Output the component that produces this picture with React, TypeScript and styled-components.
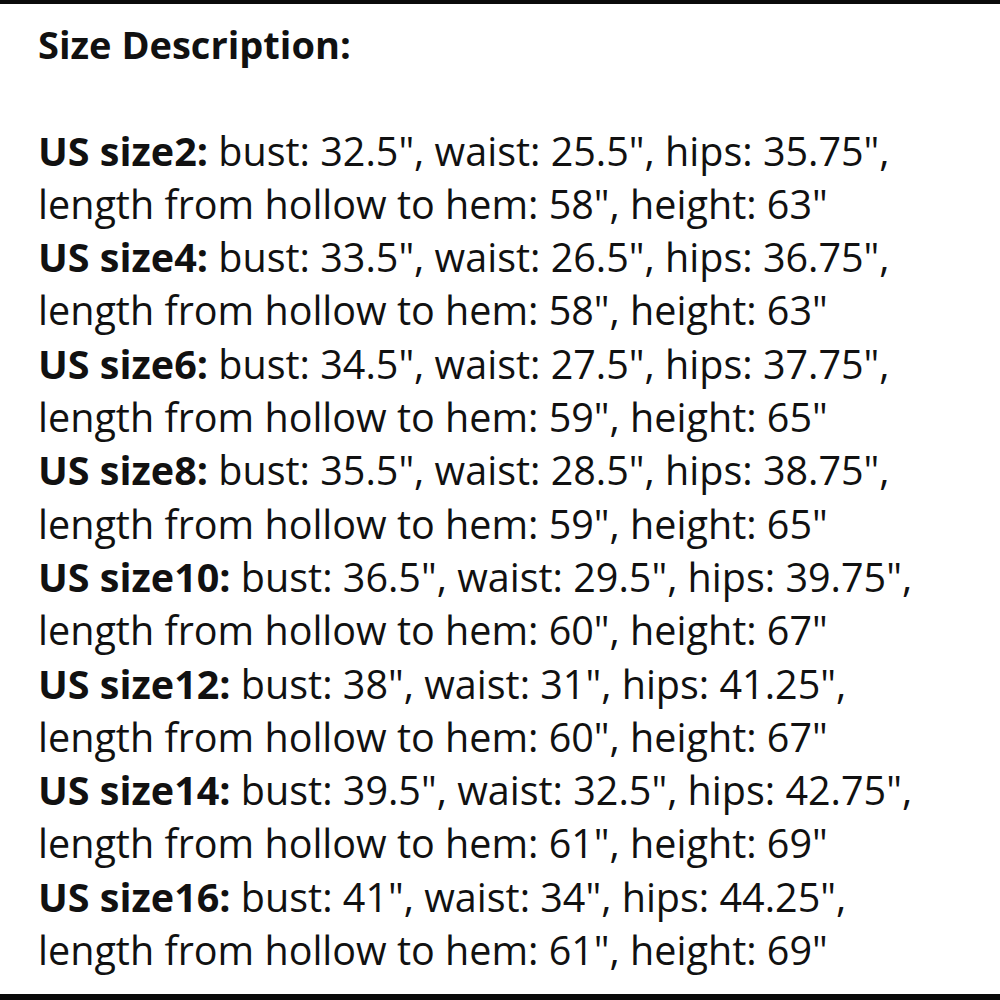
import React from "react";
import styled, { createGlobalStyle } from "styled-components";

const GlobalStyle = createGlobalStyle`
    html, body {
        margin: 0;
        padding: 0;
        background: #ffffff;
    }
`;

const Frame = styled.div`
    box-sizing: border-box;
    width: 1000px;
    height: 1000px;
    border-top: 4px solid #0a0a0a;
    border-bottom: 6px solid #0a0a0a;
    background: #ffffff;
    padding: 14px 0 0 38px;
    font-family: "Open Sans", "Noto Sans", sans-serif;
    font-size: 39.5px;
    line-height: 53.3px;
    color: #111111;
    overflow: hidden;
`;

const Title = styled.div`
    font-weight: 700;
    font-size: 38px;
    height: 53.3px;
    margin-bottom: 53.3px;
`;

const Line = styled.div`
    height: 53.3px;
    white-space: nowrap;
`;

const Label = styled.span`
    font-weight: 700;
`;

interface SizeRow {
    size: string;
    bust: string;
    waist: string;
    hips: string;
    length: string;
    height: string;
}

const sizes: SizeRow[] = [
    { size: "2", bust: "32.5", waist: "25.5", hips: "35.75", length: "58", height: "63" },
    { size: "4", bust: "33.5", waist: "26.5", hips: "36.75", length: "58", height: "63" },
    { size: "6", bust: "34.5", waist: "27.5", hips: "37.75", length: "59", height: "65" },
    { size: "8", bust: "35.5", waist: "28.5", hips: "38.75", length: "59", height: "65" },
    { size: "10", bust: "36.5", waist: "29.5", hips: "39.75", length: "60", height: "67" },
    { size: "12", bust: "38", waist: "31", hips: "41.25", length: "60", height: "67" },
    { size: "14", bust: "39.5", waist: "32.5", hips: "42.75", length: "61", height: "69" },
    { size: "16", bust: "41", waist: "34", hips: "44.25", length: "61", height: "69" },
];

const App = () => {
    return (
        <>
            <GlobalStyle />
            <Frame>
                <Title>Size Description:</Title>
                {sizes.map((row) => (
                    <React.Fragment key={row.size}>
                        <Line>
                            <Label>US size{row.size}:</Label> bust: {row.bust}", waist: {row.waist}", hips:{" "}
                            {row.hips}",
                        </Line>
                        <Line>
                            length from hollow to hem: {row.length}", height: {row.height}"
                        </Line>
                    </React.Fragment>
                ))}
            </Frame>
        </>
    );
};

export default App;
